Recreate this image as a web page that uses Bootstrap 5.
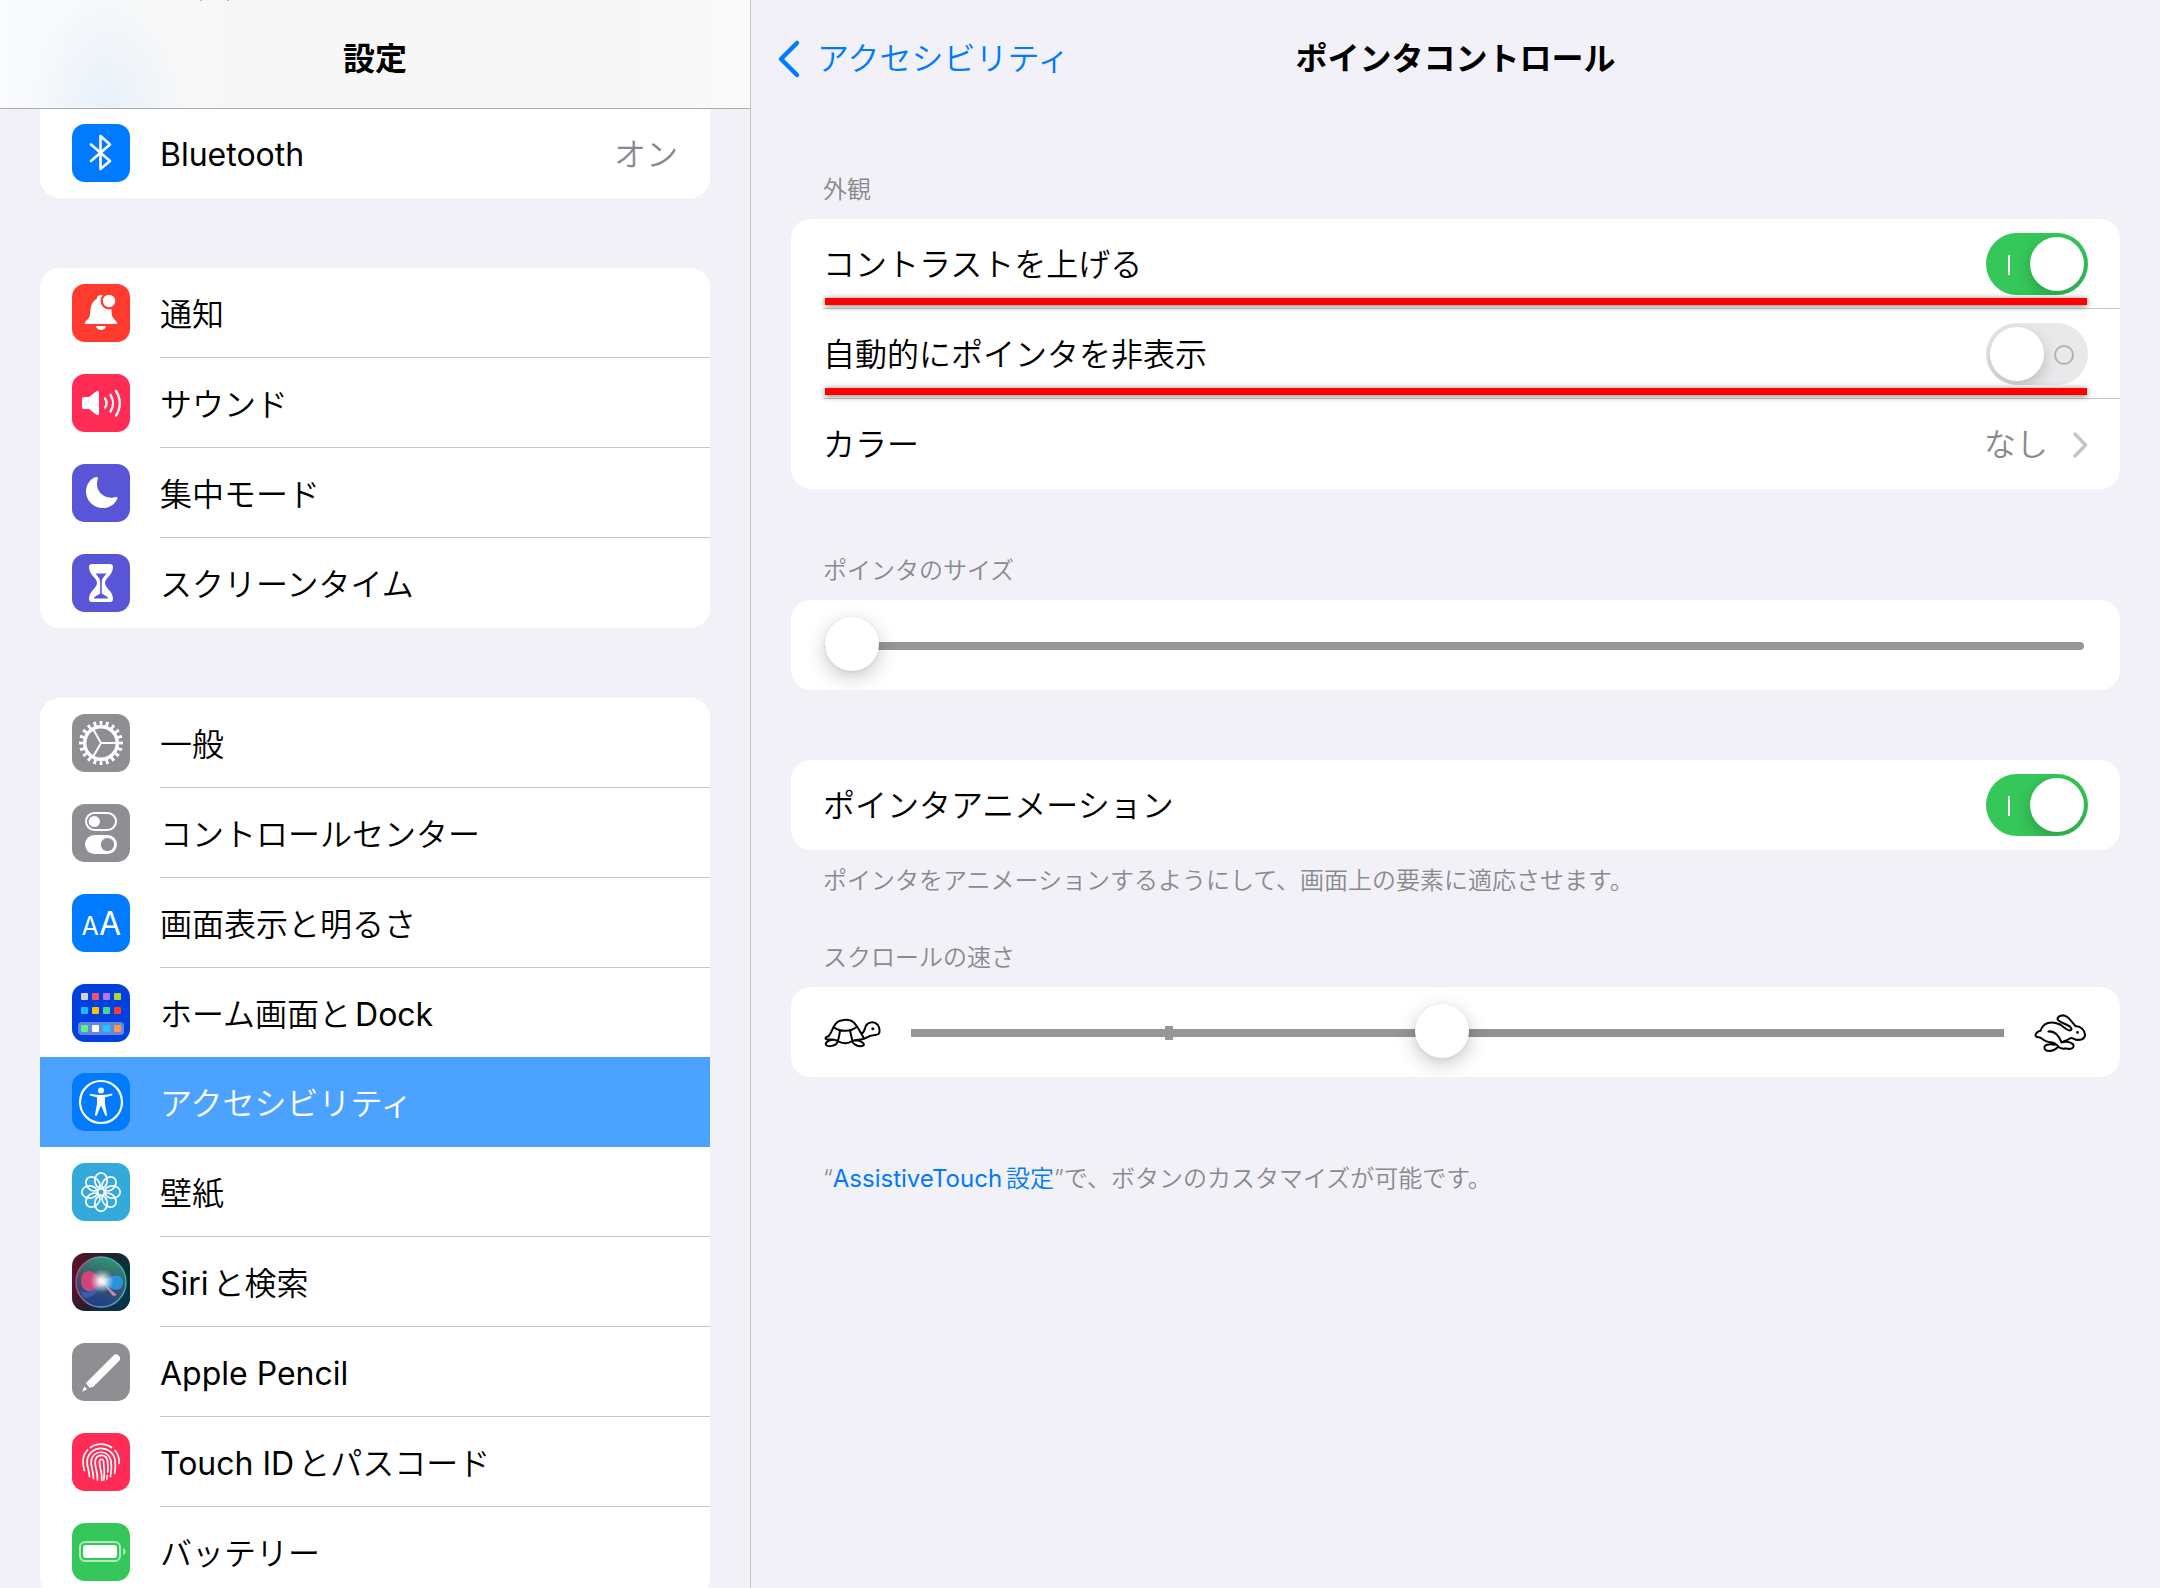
<!DOCTYPE html>
<html lang="ja">
<head>
<meta charset="utf-8">
<meta name="viewport" content="width=device-width, initial-scale=1">
<title>ポインタコントロール</title>
<link href="https://cdn.jsdelivr.net/npm/bootstrap@5.3.0/dist/css/bootstrap.min.css" rel="stylesheet">
<style>
:root{--ink:#000;--soft:#8a8a8e;--blue:#007aff;--hair:#c6c6c8;--pane:#f2f1f7;--row:90px;--icon:58px}
body{font-family:Inter,"Noto Sans CJK JP",sans-serif;font-size:32px;line-height:48px;font-weight:350;color:var(--ink);background:var(--pane)}
a{text-decoration:none;color:var(--blue)}
.side-pane{width:38%;max-width:751px;border-right:1px solid var(--hair)}
.side-head{position:relative;z-index:1;height:109px;margin-bottom:-1px;padding-top:10px;border-bottom:1px solid #acacae;
 background:
  linear-gradient(#bbb,#bbb) 200px 0/2px 1px no-repeat,
  linear-gradient(#bbb,#bbb) 227px 0/2px 1px no-repeat,
  radial-gradient(ellipse 80px 120px at 106px 108px,#e8f1fa,#e8f1fa00),
  linear-gradient(90deg,#f9fbfd,#f7f7f7 30%,#f7f7f7 85%,#fafafa)}
.pane-title{font-size:32px;line-height:48px;font-weight:700;margin:0}
.side-body{padding:0 40px}
.set-group{border-radius:20px;background:#fff;overflow:hidden}
.set-group.cut-top{border-radius:0 0 20px 20px}
.side-gap{margin-top:70px}
.set-row{--bs-list-group-action-hover-bg:#f7f7f9;display:flex;align-items:center;gap:30px;padding:0 0 0 32px;border:0;border-radius:0;background:#fff;color:var(--ink)}
.set-row>svg{width:var(--icon);height:var(--icon);border-radius:13px;flex:none}
.row-text{flex:1;min-width:0;height:var(--row);padding:4px 32px 0 0;display:flex;align-items:center;justify-content:space-between;border-bottom:1px solid var(--hair)}
.set-row:last-child .row-text,.set-row.before-pick .row-text{border-color:transparent}
.set-row.active{background:#4ca2ff;color:#fff;z-index:0;margin:0}
.set-row.active .row-text{border-color:transparent}
.soft-text{color:var(--soft)}
.latin-run{font-weight:400;margin-right:4px}
.latin-end{font-weight:400;margin-left:4px}
.main-head{height:116px;padding:2px 26px 0}
.main-head>*{flex:1 1 0}
.main-head>.pane-title{flex:none}
.back-link svg{width:24px;height:40px}
.main-body{padding:59px 40px 0}
.group-name,.group-note{display:block;font-size:24px;line-height:30px;color:var(--soft);padding:0 32px;margin:0}
.group-name{margin-bottom:14px;font-weight:350}
.opt-row{position:relative;height:var(--row);padding:0 32px 0 0;margin-left:32px;display:flex;align-items:center;justify-content:space-between;border-bottom:1px solid var(--hair);color:var(--ink)}
.opt-row:last-child{border-bottom-color:transparent}
.opt-row>label,.opt-row>span{padding-top:3px}
.marked::after{content:"";position:absolute;left:2px;right:33px;bottom:3px;height:7px;background:#f00;box-shadow:0 1px 6px rgba(0,0,0,.55)}
.ios-switch{appearance:none;position:relative;width:102px;height:62px;margin:0;border-radius:31px;background:#e9e9eb;flex:none;overflow:hidden}
.ios-switch::before{content:"";position:absolute;left:4px;top:4px;width:54px;height:54px;border-radius:50%;background:#fff;box-shadow:0 6px 16px rgba(0,0,0,.2)}
.ios-switch::after{content:"";position:absolute;left:68px;top:22px;width:20px;height:20px;border:2px solid #b3b3b3;border-radius:50%}
.ios-switch:checked{background:#35c759}
.ios-switch:checked::before{left:44px}
.ios-switch:checked::after{left:22px;width:2px;height:20px;border:0;border-radius:0;background:#fff}
.ios-range{appearance:none;display:block;flex:1;min-width:0;height:54px;margin:0;background:transparent}
.ios-range::-webkit-slider-runnable-track{height:8px;border-radius:4px;background:#969696}
.ios-range::-webkit-slider-thumb{appearance:none;width:54px;height:54px;margin-top:-25px;border:0;border-radius:50%;background:#fff;box-shadow:0 6px 20px rgba(0,0,0,.22),0 1px 4px rgba(0,0,0,.06)}
.ios-range.stepped{background:linear-gradient(#969696,#969696) 23.4% 50%/8px 14px no-repeat}
.ios-range.stepped::-webkit-slider-runnable-track{border-radius:0;background:linear-gradient(90deg,#969696 48%,#919193 49%)}
.range-row{height:var(--row);padding:2px 36px 0 34px}
.scroll-row{gap:30px;padding:2px 33px 0}
.next-mark{width:16px;height:28px;margin-left:24px}
.turtle{width:57px;height:30px;flex:none}
.rabbit{width:53px;height:40px;flex:none}
.size-part{margin-top:67px}
.scroll-part{margin-top:47px}
.foot-note{margin-top:87px}
</style>
<script src="https://cdn.jsdelivr.net/npm/bootstrap@5.3.0/dist/js/bootstrap.bundle.min.js"></script>
</head>
<body>
<div class="d-flex vh-100 overflow-hidden">
 <aside class="side-pane flex-shrink-0 w-100 overflow-hidden">
  <header class="side-head d-flex align-items-center justify-content-center"><h1 class="pane-title">設定</h1></header>
  <nav class="side-body">
   <div class="set-group cut-top list-group list-group-flush">
    <a href="#" class="set-row list-group-item list-group-item-action">
     <svg viewBox="0 0 58 58"><rect width="58" height="58" fill="#007aff"/><path d="M19 20.500 38 37 28.500 45V12L38 20.500 19 37" fill="none" stroke="#fff" stroke-width="2.600" stroke-linejoin="round" stroke-linecap="round"/></svg>
     <span class="row-text"><span class="fw-normal">Bluetooth</span><span class="soft-text">オン</span></span></a>
   </div>
   <div class="set-group side-gap list-group list-group-flush">
    <a href="#" class="set-row list-group-item list-group-item-action">
     <svg viewBox="0 0 58 58"><rect width="58" height="58" fill="#ff3b30"/><path d="M13 40v-1.500c0-1 4.500-4 5-7.500.4-3 .2-7 1.500-10 1-2.600 2.700-4.600 5-6 .6-2.400 2.200-4 4.500-4s4 1.600 4.600 4c2.300 1.400 4 3.400 5 6 1.200 3 .8 7 1.300 10 .6 3.500 5.100 6.500 5.100 7.500V40Z" fill="#fff"/><path d="M24 42h10c-.6 2.600-2.500 4-5 4s-4.400-1.400-5-4Z" fill="#fff"/><circle cx="37" cy="17" r="8.500" fill="#ff3b30"/><circle cx="37" cy="17" r="6.200" fill="#fff"/></svg>
     <span class="row-text">通知</span></a>
    <a href="#" class="set-row list-group-item list-group-item-action">
     <svg viewBox="0 0 58 58"><rect width="58" height="58" fill="#ff2d55"/><path d="M12 23h5l7-5.500c1.500-1 3-.8 3 1v21c0 1.800-1.500 2-3 1L17 35h-5c-1.400 0-2-.7-2-2v-8c0-1.300.6-2 2-2Z" fill="#fff"/><path d="M33 24.500c2 3 2 6.500 0 9M38.500 21c3.300 5 3.300 11.500 0 16.500M44 17c5 7.500 5 17 0 24.500" fill="none" stroke="#fff" stroke-width="2.300" stroke-linecap="round"/></svg>
     <span class="row-text">サウンド</span></a>
    <a href="#" class="set-row list-group-item list-group-item-action">
     <svg viewBox="0 0 58 58"><rect width="58" height="58" fill="#5856d6"/><path d="M24.500 13c1 0 1.800.6 1.400 1.800C22.500 24 29 33.800 39.500 33.700c1.700 0 3-.3 4.500-.8 1.200-.3 1.800.6 1.300 1.800C43 40.300 37.300 44 31 44c-9.500 0-17-7.300-17-16.500 0-6 3.500-12 9-14.300Z" fill="#fff"/></svg>
     <span class="row-text">集中モード</span></a>
    <a href="#" class="set-row list-group-item list-group-item-action">
     <svg viewBox="0 0 58 58"><rect width="58" height="58" fill="#5856d6"/><path d="M20 10h18c2 0 3 1 3 3 0 8-8 11-8 16s8 8 8 16c0 2-1 3-3 3H20c-2 0-3-1-3-3 0-8 8-11 8-16s-8-8-8-16c0-2 1-3 3-3Z" fill="#fff"/><path d="M23.500 19.500h11c-2 3-4.700 4.500-4.700 8.500v11.500c1.500 1.800 5.200 2 6.500 5H21.700c1.300-3 5-3.200 6.500-5V28c0-4-2.700-5.500-4.700-8.500Z" fill="#5856d6"/></svg>
     <span class="row-text">スクリーンタイム</span></a>
   </div>
   <div class="set-group side-gap list-group list-group-flush">
    <a href="#" class="set-row list-group-item list-group-item-action">
     <svg viewBox="0 0 58 58"><rect width="58" height="58" fill="#8e8e93"/><g fill="none" stroke="#fff"><circle cx="29" cy="29" r="16.300" stroke-width="3.400"/><circle cx="29" cy="29" r="19.500" stroke-width="5" pathLength="40" stroke-dasharray=".9 1.100" stroke-dashoffset=".45"/><path d="M29 29h16M29 29l-8-13.900M29 29l-8 13.900" stroke-width="2"/></g></svg>
     <span class="row-text">一般</span></a>
    <a href="#" class="set-row list-group-item list-group-item-action">
     <svg viewBox="0 0 58 58"><rect width="58" height="58" fill="#8e8e93"/><rect x="14" y="9" width="30" height="17" rx="8.500" fill="none" stroke="#fff" stroke-width="2"/><circle cx="22.300" cy="17.500" r="5.600" fill="#fff"/><rect x="13" y="31" width="32" height="19" rx="9.500" fill="#fff"/><circle cx="35.500" cy="40.500" r="6.600" fill="#8e8e93"/></svg>
     <span class="row-text">コントロールセンター</span></a>
    <a href="#" class="set-row list-group-item list-group-item-action">
     <svg viewBox="0 0 58 58"><rect width="58" height="58" fill="#007aff"/><g fill="#fff" font-family="Inter" font-weight="400" text-anchor="middle"><text x="18" y="41" font-size="25">A</text><text x="38" y="41" font-size="32">A</text></g></svg>
     <span class="row-text">画面表示と明るさ</span></a>
    <a href="#" class="set-row before-pick list-group-item list-group-item-action">
     <svg viewBox="0 0 58 58"><rect width="58" height="58" fill="#0040dd"/><rect x="6" y="38" width="46" height="13" rx="4" fill="#6488e6"/><g><rect x="9" y="9" width="7" height="7" rx="1" fill="#d6d3cd"/><rect x="20" y="9" width="7" height="7" rx="1" fill="#ff4f62"/><rect x="31" y="9" width="7" height="7" rx="1" fill="#b574ff"/><rect x="42" y="9" width="7" height="7" rx="1" fill="#b3d233"/><rect x="9" y="23" width="7" height="7" rx="1" fill="#19b9ff"/><rect x="20" y="23" width="7" height="7" rx="1" fill="#ffc000"/><rect x="31" y="23" width="7" height="7" rx="1" fill="#3fd8a0"/><rect x="42" y="23" width="7" height="7" rx="1" fill="#ff3a30"/><rect x="9" y="41" width="7" height="7" rx="1" fill="#5bf675"/><rect x="20" y="41" width="7" height="7" rx="1" fill="#fff"/><rect x="31" y="41" width="7" height="7" rx="1" fill="#19caff"/><rect x="42" y="41" width="7" height="7" rx="1" fill="#ff9a3f"/></g></svg>
     <span class="row-text"><span>ホーム画面と<span class="latin-end">Dock</span></span></span></a>
    <a href="#" class="set-row active list-group-item list-group-item-action" aria-current="page">
     <svg viewBox="0 0 58 58"><rect width="58" height="58" fill="#007aff"/><circle cx="29" cy="29" r="21" fill="none" stroke="#fff" stroke-width="2.200"/><circle cx="29" cy="17.500" r="3" fill="#fff"/><path d="M18.500 20.800c3.500.8 7 1.200 10.500 1.200s7-.4 10.500-1.200c1-.1 1.200 1.500.2 1.800-2.200.7-4.700 1.200-6.700 1.600v6.800l2 10.600c.2 1.400-1.600 1.800-2 .5L29.300 33h-.6L25 42.100c-.4 1.300-2.200.9-2-.5L25 31v-6.800c-2-.4-4.500-.9-6.700-1.600-1-.3-.8-1.900.2-1.800Z" fill="#fff"/></svg>
     <span class="row-text">アクセシビリティ</span></a>
    <a href="#" class="set-row list-group-item list-group-item-action">
     <svg viewBox="0 0 58 58"><rect width="58" height="58" fill="#34aadc"/><g fill="none" stroke="#fff" stroke-width="1.700"><circle cx="29" cy="29" r="3.400"/><g id="petals"><ellipse id="petal" cx="29" cy="17.600" rx="6.200" ry="7.800"/><use href="#petal" transform="rotate(45 29 29)"/></g><use href="#petals" transform="rotate(90 29 29)"/><use href="#petals" transform="rotate(180 29 29)"/><use href="#petals" transform="rotate(270 29 29)"/></g></svg>
     <span class="row-text">壁紙</span></a>
    <a href="#" class="set-row list-group-item list-group-item-action">
     <svg viewBox="0 0 58 58"><defs><linearGradient id="sBg" x1="0" y1="0" x2="1" y2=".3"><stop offset="0" stop-color="#6a0f2c"/><stop offset=".5" stop-color="#20202c"/><stop offset="1" stop-color="#083338"/></linearGradient><linearGradient id="sOrb" x1=".7" y1="0" x2=".4" y2="1"><stop offset="0" stop-color="#2a9b78"/><stop offset=".5" stop-color="#3f5468"/><stop offset="1" stop-color="#183f92"/></linearGradient><radialGradient id="sGlow"><stop offset="0" stop-color="#fff"/><stop offset=".3" stop-color="#fff" stop-opacity=".8"/><stop offset="1" stop-color="#cde" stop-opacity="0"/></radialGradient><linearGradient id="sRim"><stop offset="0" stop-color="#c04868"/><stop offset=".5" stop-color="#6d9aa8"/><stop offset="1" stop-color="#28b8b0"/></linearGradient></defs><rect width="58" height="58" fill="url(#sBg)"/><path d="M58 30v28H20Z" fill="#0c3055" opacity=".7"/><circle cx="29" cy="29" r="25" fill="url(#sOrb)" stroke="url(#sRim)" stroke-width="1.500"/><path d="M30 29C22 14 9 15 9 28s14 14 21 1Z" fill="#e0447c" opacity=".9"/><path d="M30 29c8-8 21-9 21 0s-9 12-21 0Z" fill="#2898e8" opacity=".9"/><path d="M8 38c10 4 16-4 22-8-4 10-10 15-18 15Z" fill="#4266b8" opacity=".7"/><path d="M30 29 45 42 41 43Z" fill="#e6a3b8" opacity=".8"/><circle cx="30" cy="28" r="12" fill="url(#sGlow)"/></svg>
     <span class="row-text"><span><span class="latin-run">Siri</span>と検索</span></span></a>
    <a href="#" class="set-row list-group-item list-group-item-action">
     <svg viewBox="0 0 58 58"><rect width="58" height="58" fill="#8e8e93"/><path d="m19 40.500 25-25" stroke="#fff" stroke-width="8" stroke-linecap="round"/><path d="m13.600 37.500 7.400 7.400-4 1.500-5-5Z" fill="#8e8e93"/><path d="m15 38.500 4.800 5.500-2 1-3.800-4.800Z" fill="#fff"/><path d="m12.500 43.500 2.700 2.700-5.200 2.600Z" fill="#fff"/></svg>
     <span class="row-text fw-normal">Apple Pencil</span></a>
    <a href="#" class="set-row list-group-item list-group-item-action">
     <svg viewBox="0 0 58 58"><rect width="58" height="58" fill="#ff2d55"/><g fill="none" stroke="#fff" stroke-width="1.700" stroke-linecap="round"><path d="M18.500 14.500c6-4.500 15-4.500 21 0M12.300 37.500C10 29 10.500 22 15.500 17M43 17.500c3.500 4 4.500 8.500 4 13"/><path d="M17.500 43.500c-.3-7-3-9.500-2.300-16C17 12 40 11 43 27c.6 4.500.5 9-.3 13.500M21.500 45.500c-.2-9-3.200-12-2.200-18C21 17 36 16 39 27.500c.8 5 .5 11-.6 16M25.500 47c.3-9-3-13-2.300-19 1-7 11-8 12.300 0 .5 4 .6 8 .2 11M29.700 47.500C30.500 38 27 34 27.500 28.500c.4-3 3.700-3 4 0 .8 7 1.500 12 .2 18.500M35.300 42.500l-.4 3.500"/></g></svg>
     <span class="row-text"><span><span class="latin-run">Touch ID</span>とパスコード</span></span></a>
    <a href="#" class="set-row list-group-item list-group-item-action">
     <svg viewBox="0 0 58 58"><rect width="58" height="58" fill="#35c759"/><rect x="8" y="19" width="40" height="19" rx="5" fill="none" stroke="#fff" stroke-opacity=".6" stroke-width="2"/><rect x="11" y="22" width="34" height="13" rx="3" fill="#fff"/><path d="M51 25c3.600 1.500 3.600 5.500 0 7Z" fill="#fff" fill-opacity=".6"/></svg>
     <span class="row-text">バッテリー</span></a>
   </div>
  </nav>
 </aside>
 <main class="flex-grow-1">
  <header class="main-head d-flex align-items-center">
   <div class="d-flex"><a href="#" class="back-link d-flex align-items-center gap-3"><svg viewBox="0 0 24 40"><path d="M20 4 4 20 20 36" fill="none" stroke="#007aff" stroke-width="4.500" stroke-linecap="round" stroke-linejoin="round"/></svg>アクセシビリティ</a></div>
   <h2 class="pane-title">ポインタコントロール</h2>
   <div></div>
  </header>
  <div class="main-body">
   <section>
    <h3 class="group-name">外観</h3>
    <div class="set-group">
     <div class="opt-row marked"><label for="contrast">コントラストを上げる</label><input id="contrast" class="ios-switch" type="checkbox" role="switch" checked></div>
     <div class="opt-row marked"><label for="autohide">自動的にポインタを非表示</label><input id="autohide" class="ios-switch" type="checkbox" role="switch"></div>
     <a href="#" class="opt-row"><span>カラー</span><span class="soft-text d-flex align-items-center">なし<svg class="next-mark" viewBox="0 0 16 28"><path d="m3 3 10.500 11L3 25" fill="none" stroke="#c4c4c7" stroke-width="3.400" stroke-linecap="round" stroke-linejoin="round"/></svg></span></a>
    </div>
   </section>
   <section class="size-part">
    <label class="group-name" for="size">ポインタのサイズ</label>
    <div class="set-group range-row d-flex align-items-center"><input id="size" class="ios-range" type="range" min="0" max="100" value="0"></div>
   </section>
   <section class="side-gap">
    <div class="set-group"><div class="opt-row"><label for="anim">ポインタアニメーション</label><input id="anim" class="ios-switch" type="checkbox" role="switch" checked></div></div>
    <p class="group-note mt-3">ポインタをアニメーションするようにして、画面上の要素に適応させます。</p>
   </section>
   <section class="scroll-part">
    <label class="group-name" for="speed">スクロールの速さ</label>
    <div class="set-group range-row scroll-row d-flex align-items-center">
     <svg class="turtle" viewBox="131 171 170 90"><g fill="none" stroke="#000" stroke-width="6" stroke-linecap="round" stroke-linejoin="round"><path d="M144 226C155 212 156 200 165 189 175 174 207 173 219 184 230 194 236 208 243 219M144 226C134 228 133 234 138 235 150 237 160 234 172 240 185 249 203 249 216 240 225 234 240 238 251 233M160 199C180 213 210 213 229 197M178 210C178 222 175 228 172 240M209 210C211 222 214 230 216 240M243 219C252 214 252 205 256 195 262 182 282 180 292 192 298 200 299 215 294 219 288 223 275 222 268 225 262 228 257 232 251 233L243 219M160 236C145 236 134 244 136 251 139 258 158 256 166 250 170 247 172 244 172 240M222 238C240 238 251 245 250 252 246 258 232 256 224 251 218 247 214 244 216 240"/></g><circle cx="277" cy="203" r="4.500"/></svg>
     <input id="speed" class="ios-range stepped" type="range" min="0" max="200" value="97">
     <svg class="rabbit" viewBox="402 1312 162 117" preserveAspectRatio="none"><path d="M422 1364C410 1366 403 1376 409 1381 413 1384 419 1382 423 1385 432 1392 445 1398 458 1398 467 1399 473 1406 478 1412M422 1364C430 1340 455 1334 480 1345 492 1351 500 1362 511 1363 518 1362 519 1358 512 1352 500 1343 480 1340 474 1331 473 1320 490 1315 503 1323 515 1332 522 1345 530 1351 545 1350 557 1362 558 1376 557 1390 543 1392 530 1390 522 1388 518 1382 512 1386 503 1392 495 1394 486 1398M446 1366C465 1364 478 1378 486 1398 500 1395 515 1398 521 1403 526 1412 520 1417 510 1417 495 1414 485 1420 478 1412M466 1405C445 1401 433 1406 434 1414 436 1426 460 1426 474 1413" fill="none" stroke="#000" stroke-width="6" stroke-linecap="round" stroke-linejoin="round"/><circle cx="535" cy="1369" r="4"/></svg>
    </div>
    <p class="group-note foot-note">“<a href="#"><span class="latin-run">AssistiveTouch</span>設定</a>”で、ボタンのカスタマイズが可能です。</p>
   </section>
  </div>
 </main>
</div>
</body>
</html>
